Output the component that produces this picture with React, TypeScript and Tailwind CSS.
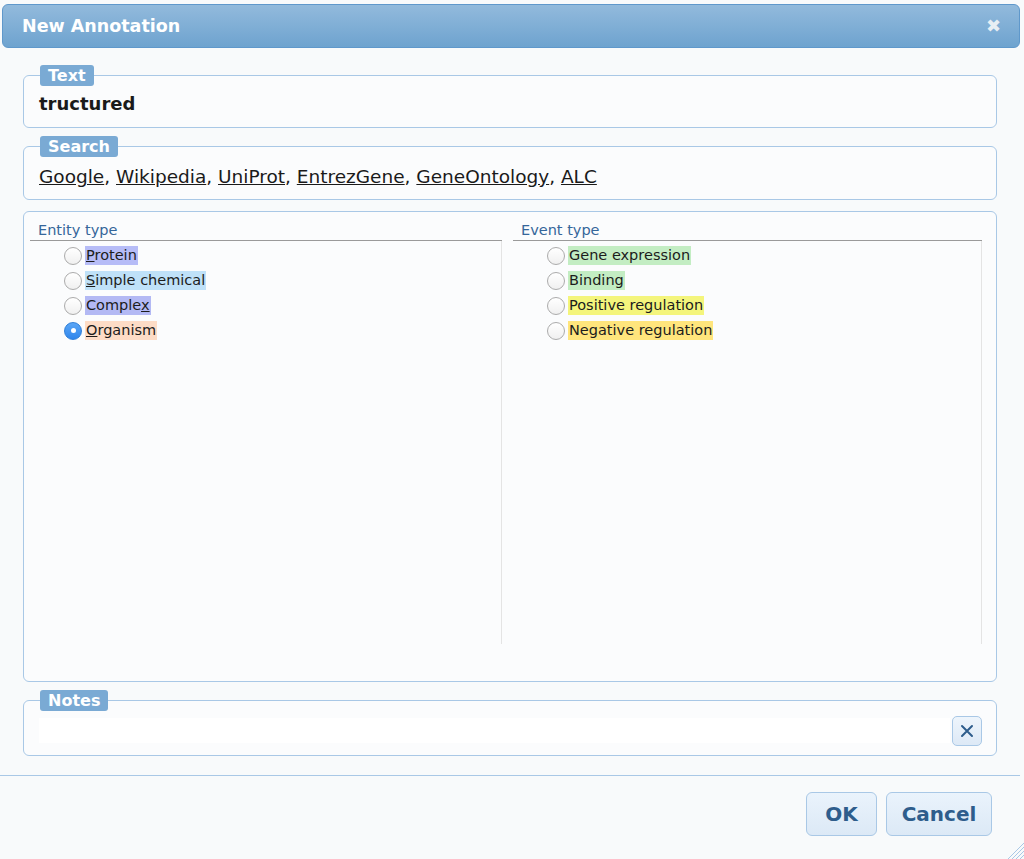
import React from "react";

const font = { fontFamily: '"DejaVu Sans", "Liberation Sans", sans-serif' };

function Legend({ children }: { children: React.ReactNode }) {
  return (
    <legend className="ml-[1px] px-[8px] h-[21px] leading-[21px] rounded-[3px] bg-[#7aaad4] text-white font-bold text-[16px]">
      {children}
    </legend>
  );
}

type Item = { pre: string; u: string; post: string; bg: string; checked?: boolean };

function Radio({ checked }: { checked?: boolean }) {
  if (checked) {
    return (
      <span className="w-[18px] h-[18px] rounded-full bg-gradient-to-b from-[#5aa6f6] to-[#2f86ec] border border-[#2f7fd8] flex items-center justify-center shrink-0">
        <span className="w-[5px] h-[5px] rounded-full bg-white" />
      </span>
    );
  }
  return (
    <span className="w-[18px] h-[18px] rounded-full bg-gradient-to-b from-white to-[#f0f0f0] border border-[#ababab] shrink-0" />
  );
}

function Column({ title, items }: { title: string; items: Item[] }) {
  return (
    <div className="flex flex-col">
      <div className="h-[29px] pt-[9px] pl-[8px] border-b border-[#9a9a9a] text-[14.5px] leading-[18px] text-[#35669a]">
        {title}
      </div>
      <div className="h-[403px] pt-[2px] border-r border-[#e4e4e4]">
        {items.map((it, i) => (
          <div key={i} className="h-[25px] flex items-center pl-[34px] gap-[3px]">
            <Radio checked={it.checked} />
            <span className={`text-[14.5px] leading-[19px] text-[#1c1c1c] px-[1px] ${it.bg}`}>
              {it.pre}
              <span className="underline">{it.u}</span>
              {it.post}
            </span>
          </div>
        ))}
      </div>
    </div>
  );
}

export default function App() {
  const entities: Item[] = [
    { pre: "", u: "P", post: "rotein", bg: "bg-[#b6bcf7]" },
    { pre: "", u: "S", post: "imple chemical", bg: "bg-[#bfe1f8]" },
    { pre: "Comple", u: "x", post: "", bg: "bg-[#b3b9f4]" },
    { pre: "", u: "O", post: "rganism", bg: "bg-[#fddcc6]", checked: true },
  ];
  const events: Item[] = [
    { pre: "Gene expression", u: "", post: "", bg: "bg-[#c3edc3]" },
    { pre: "Binding", u: "", post: "", bg: "bg-[#c3edc3]" },
    { pre: "Positive regulation", u: "", post: "", bg: "bg-[#f4f57c]" },
    { pre: "Negative regulation", u: "", post: "", bg: "bg-[#ffe57c]" },
  ];
  const links = ["Google", "Wikipedia", "UniProt", "EntrezGene", "GeneOntology", "ALC"];

  return (
    <div className="w-[1024px] h-[859px] bg-[#f8fafb] relative overflow-hidden" style={font}>
      {/* Title bar */}
      <div className="mt-[4px] mx-[2px] w-[1018px] h-[44px] rounded-[6px] border border-[#5f98cb] bg-gradient-to-b from-[#92badc] to-[#6ea3cf] flex items-center justify-between pl-[19px] pr-[18px]">
        <span className="text-white font-bold text-[17.5px] leading-[22px]">New Annotation</span>
        <span className="text-[#e8eef4] font-bold text-[18px] leading-none">✖</span>
      </div>

      <div className="px-[23px] pr-[27px]">
        {/* Text */}
        <fieldset className="mt-[17px] border border-[#a9c8e6] rounded-[6px] px-[15px] bg-[#fbfcfd]">
          <Legend>Text</Legend>
          <div className="pt-[6px] pb-[11px] leading-[24px] text-[18px] font-bold text-[#1a1a1a]">tructured</div>
        </fieldset>

        {/* Search */}
        <fieldset className="mt-[8px] border border-[#a9c8e6] rounded-[6px] px-[15px] bg-[#fbfcfd]">
          <Legend>Search</Legend>
          <div className="pt-[8px] pb-[10px] leading-[24px] text-[18.5px] text-[#1a1a1a]">
            {links.map((l, i) => (
              <React.Fragment key={l}>
                <span className="underline">{l}</span>
                {i < links.length - 1 ? ", " : ""}
              </React.Fragment>
            ))}
          </div>
        </fieldset>

        {/* Types */}
        <div className="mt-[11px] h-[471px] border border-[#a9c8e6] rounded-[6px] pl-[6px] grid grid-cols-[472px_469px] gap-x-[11px] bg-[#fbfcfd]">
          <Column title="Entity type" items={entities} />
          <Column title="Event type" items={events} />
        </div>

        {/* Notes */}
        <fieldset className="mt-[8px] border border-[#a9c8e6] rounded-[6px] pl-[15px] pr-[14px] bg-[#fbfcfd]">
          <Legend>Notes</Legend>
          <div className="flex items-start pt-[5px] pb-[9px]">
            <div className="flex-1 h-[25px] mt-[2px] bg-white" />
            <button className="ml-[2px] w-[30px] h-[30px] rounded-[5px] border border-[#a9c8e6] bg-gradient-to-b from-[#eef5fc] to-[#dde9f6] flex items-center justify-center">
              <svg width="14" height="14" viewBox="0 0 14 14">
                <path d="M2 2 L12 12 M12 2 L2 12" stroke="#2e5d8c" strokeWidth="2" strokeLinecap="round" />
              </svg>
            </button>
          </div>
        </fieldset>
      </div>

      {/* Separator */}
      <div className="mt-[19px] w-[1020px] border-t border-[#a9c8e6]" />

      {/* Buttons */}
      <div className="mt-[16px] flex justify-end gap-[9px] pr-[32px]">
        <button className="w-[71px] h-[44px] rounded-[6px] border border-[#a9c8e6] bg-gradient-to-b from-[#eaf3fc] to-[#dce9f6] text-[#2e5d8c] font-bold text-[20px]">
          OK
        </button>
        <button className="w-[106px] h-[44px] rounded-[6px] border border-[#a9c8e6] bg-gradient-to-b from-[#eaf3fc] to-[#dce9f6] text-[#2e5d8c] font-bold text-[20px]">
          Cancel
        </button>
      </div>

      {/* Resize grip */}
      <svg className="absolute right-0 bottom-0" width="16" height="16" viewBox="0 0 16 16">
        <path d="M16 4 L4 16 M16 8 L8 16 M16 12 L12 16 M16 0 L0 16" stroke="#a9c8e6" strokeWidth="1" />
      </svg>
    </div>
  );
}
